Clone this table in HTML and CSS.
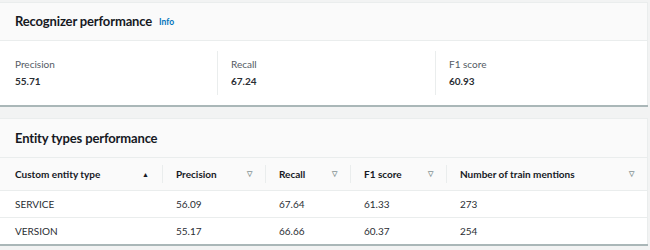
FILE: index.html
```html
<!DOCTYPE html>
<html>
<head>
<meta charset="utf-8">
<link rel="stylesheet" href="styles.css">
</head>
<body>
<div class="page">
  <section class="card">
    <div class="card-header">
      <h2 class="title">Recognizer performance</h2>
      <span class="info">Info</span>
    </div>
    <div class="metrics">
      <div class="metric"><div class="label">Precision</div><div class="value">55.71</div></div>
      <div class="metric"><div class="label">Recall</div><div class="value">67.24</div></div>
      <div class="metric"><div class="label">F1 score</div><div class="value">60.93</div></div>
    </div>
  </section>
  <section class="card card2">
    <div class="card-header header2">
      <h2 class="title">Entity types performance</h2>
    </div>
    <table class="table">
      <colgroup>
        <col class="c1"><col class="c2"><col class="c3"><col class="c4"><col class="c5">
      </colgroup>
      <thead>
        <tr>
          <th><div class="th"><span>Custom entity type</span><span class="sort up">&#9650;</span></div></th>
          <th><div class="th div"><span>Precision</span><span class="sort">&#9661;</span></div></th>
          <th><div class="th div"><span>Recall</span><span class="sort">&#9661;</span></div></th>
          <th><div class="th div"><span>F1 score</span><span class="sort">&#9661;</span></div></th>
          <th><div class="th div"><span>Number of train mentions</span><span class="sort">&#9661;</span></div></th>
        </tr>
      </thead>
      <tbody>
        <tr><td>SERVICE</td><td>56.09</td><td>67.64</td><td>61.33</td><td>273</td></tr>
        <tr><td>VERSION</td><td>55.17</td><td>66.66</td><td>60.37</td><td>254</td></tr>
      </tbody>
    </table>
  </section>
</div>
</body>
</html>
```
FILE: styles.css
```css
* { box-sizing: border-box; margin: 0; padding: 0; }
html, body { width: 650px; height: 250px; overflow: hidden; }
body {
  background: #f2f3f3;
  font-family: "Lato", "Noto Sans", sans-serif;
  color: #16191f;
  font-size: 10px;
}
.page { padding: 2px 2px 0 0; display: flex; flex-direction: column; gap: 13px; }
.card {
  background: #fff;
  border-top: 1px solid #eaeded;
  border-right: 1px solid #eaeded;
  box-shadow: 0 2px 0 0 #aab7b8;
}
.card-header {
  background: #fafafa;
  border-bottom: 1px solid #eaeded;
  height: 38px;
  display: flex;
  align-items: center;
  padding-left: 15px;
  gap: 7px;
}
.title { font-size: 13px; font-weight: 700; letter-spacing: -0.15px; margin-top: -1px; }
.info { color: #0073bb; font-size: 8.5px; font-weight: 700; margin-top: 1px; }
.metrics { display: grid; grid-template-columns: 217px 218px 1fr; padding: 10px 0 10px; height: 64px; }
.metric { padding: 7px 0 0 15px; }
.metric + .metric { border-left: 1px solid #eaeded; padding-left: 13px; }
.label { color: #545b64; font-size: 10px; }
.value { font-weight: 700; font-size: 10px; margin-top: 5px; color: #2a2e33; }
.header2 { height: 39px; }
.table { width: 100%; border-collapse: collapse; table-layout: fixed; }
.c1 { width: 162px; } .c2 { width: 103px; } .c3 { width: 85px; } .c4 { width: 96px; }
th { background: #fafafa; height: 32px; text-align: left; font-weight: 700; font-size: 10px; border-bottom: 1px solid #eaeded; padding: 0; }
.th { display: flex; justify-content: space-between; align-items: center; padding: 0 13px 0 15px; height: 18px; }
.th.div { border-left: 1px solid #eaeded; padding-left: 13px; }
.sort { font-size: 7px; color: #879596; }
.sort.up { color: #16191f; font-size: 7px; }
td { height: 27px; padding: 0 0 0 15px; font-size: 10px; border-bottom: 1px solid #eaeded; color: #2a2e33; }
td + td { padding-left: 14px; }
tbody tr:last-child td { border-bottom: none; }
```
